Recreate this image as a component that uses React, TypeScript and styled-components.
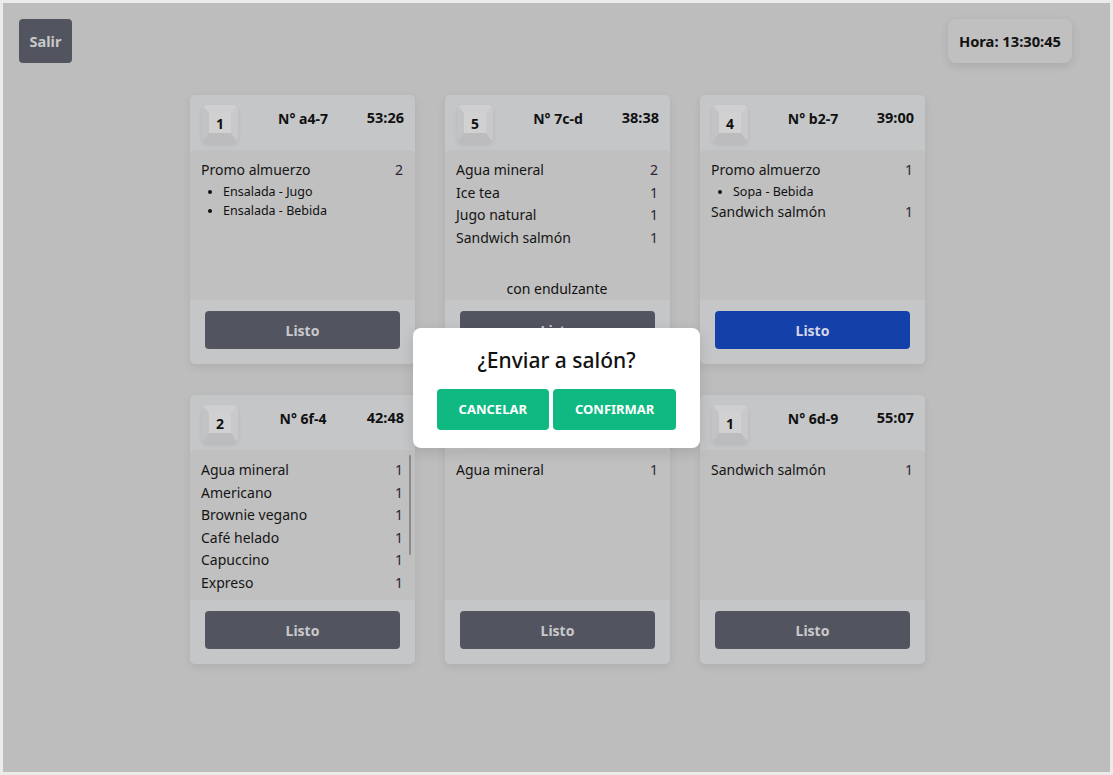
import React from "react";
import styled, { createGlobalStyle } from "styled-components";

const Global = createGlobalStyle`
  html, body { margin: 0; padding: 0; }
  body {
    background: #ebebeb;
    font-family: "Noto Sans", "Open Sans", Arial, sans-serif;
    color: #111;
  }
  * { box-sizing: border-box; }
`;

const Page = styled.div`
  position: relative;
  margin: 3px;
  height: 769px;
  background: #bdbdbd;
  overflow: hidden;
`;

const TopBar = styled.div`
  display: flex;
  justify-content: space-between;
  align-items: flex-start;
  padding: 16px 38px 0 16px;
`;

const DarkButton = styled.button<{ $active?: boolean }>`
  border: none;
  border-radius: 4px;
  background: ${(p) => (p.$active ? "#1340a9" : "#525560")};
  color: ${(p) => (p.$active ? "#d4d6e8" : "#c9c9cb")};
  font-family: inherit;
  font-weight: 700;
  font-size: 14px;
  cursor: pointer;
`;

const ExitButton = styled(DarkButton)`
  width: 53px;
  height: 44px;
  font-size: 14.5px;
`;

const Clock = styled.div`
  height: 44px;
  padding: 0 11px;
  display: flex;
  align-items: center;
  background: #c0c0c0;
  border-radius: 8px;
  box-shadow: 0 3px 10px rgba(0, 0, 0, 0.1);
  font-weight: 700;
  font-size: 14.7px;
  color: #111;
`;

const Grid = styled.div`
  display: grid;
  grid-template-columns: repeat(3, 225px);
  column-gap: 30px;
  row-gap: 31px;
  justify-content: center;
  margin-top: 32px;
  padding-left: 2px;
`;

const Card = styled.div`
  width: 225px;
  height: 269px;
  background: #c5c6c8;
  border-radius: 5px;
  box-shadow: 0 3px 8px rgba(0, 0, 0, 0.08);
  display: flex;
  flex-direction: column;
`;

const CardHeader = styled.div`
  height: 55px;
  display: grid;
  grid-template-columns: 1fr auto 1fr;
  align-items: start;
  padding: 10px 11px 0 12px;
`;

const Badge = styled.div`
  width: 36px;
  height: 38px;
  border-style: solid;
  border-width: 8px 7px 10px 7px;
  border-color: #cfcfd1 #c9c9cb #bcbcbe #c3c3c5;
  border-radius: 5px;
  background: #d1d1d1;
  box-shadow: 0 2px 4px rgba(0, 0, 0, 0.08);
  display: flex;
  align-items: flex-end;
  justify-content: center;
  font-weight: 700;
  font-size: 14px;
  line-height: 18px;
  color: #111;
`;

const OrderNo = styled.div`
  font-weight: 700;
  font-size: 14px;
  line-height: 20px;
  margin-top: 4px;
  white-space: nowrap;
`;

const Timer = styled.div`
  justify-self: end;
  font-weight: 700;
  font-size: 14.5px;
  line-height: 20px;
  margin-top: 2px;
`;

const ItemsWrap = styled.div`
  position: relative;
  height: 150px;
  background: #c0c0c0;
  border-radius: 5px 5px 0 0;
`;

const Items = styled.div`
  height: 100%;
  padding: 9px 12px 0 11px;
  overflow-y: auto;
  display: flex;
  flex-direction: column;
`;

const ScrollThumb = styled.div`
  position: absolute;
  right: 4px;
  top: 5px;
  width: 2px;
  height: 100px;
  border-radius: 1px;
  background: #8a8a8a;
`;

const ItemRow = styled.div`
  display: flex;
  justify-content: space-between;
  font-size: 14px;
  line-height: 22.5px;
  color: #151515;
  flex-shrink: 0;
`;

const Qty = styled.span`
  color: #2b2436;
`;

const SubList = styled.ul`
  margin: 0;
  padding-left: 22px;
  font-size: 12.5px;
  line-height: 19px;
  flex-shrink: 0;
  li::marker { font-size: 11px; }
`;

const Note = styled.div`
  margin-top: auto;
  text-align: center;
  font-size: 14px;
  line-height: 22px;
`;

const CardFooter = styled.div`
  flex: 1;
  display: flex;
  justify-content: center;
  padding-top: 11px;
`;

const ReadyButton = styled(DarkButton)`
  width: 195px;
  height: 38px;
`;

const Overlay = styled.div`
  position: absolute;
  inset: 0;
  display: flex;
  align-items: center;
  justify-content: center;
`;

const Modal = styled.div`
  width: 287px;
  background: #ffffff;
  border-radius: 8px;
  padding: 18px 22px 18px 22px;
  display: flex;
  flex-direction: column;
  align-items: center;
  gap: 14px;
  box-shadow: 0 4px 14px rgba(0, 0, 0, 0.12);
`;

const ModalTitle = styled.div`
  font-size: 21px;
  font-weight: 500;
  line-height: 29px;
  color: #111;
`;

const ModalActions = styled.div`
  display: flex;
  gap: 4px;
`;

const GreenButton = styled.button`
  height: 41px;
  padding: 0 22px;
  border: none;
  border-radius: 4px;
  background: #10b981;
  color: #fff;
  font-family: inherit;
  font-weight: 700;
  font-size: 13px;
  text-transform: uppercase;
  cursor: pointer;
`;

type Item = { name: string; qty: number; subs?: string[] };
type Order = {
  badge: number;
  no: string;
  time: string;
  items: Item[];
  note?: string;
  active?: boolean;
};

const orders: Order[] = [
  {
    badge: 1,
    no: "a4-7",
    time: "53:26",
    items: [{ name: "Promo almuerzo", qty: 2, subs: ["Ensalada - Jugo", "Ensalada - Bebida"] }],
  },
  {
    badge: 5,
    no: "7c-d",
    time: "38:38",
    items: [
      { name: "Agua mineral", qty: 2 },
      { name: "Ice tea", qty: 1 },
      { name: "Jugo natural", qty: 1 },
      { name: "Sandwich salmón", qty: 1 },
    ],
    note: "con endulzante",
  },
  {
    badge: 4,
    no: "b2-7",
    time: "39:00",
    items: [
      { name: "Promo almuerzo", qty: 1, subs: ["Sopa - Bebida"] },
      { name: "Sandwich salmón", qty: 1 },
    ],
    active: true,
  },
  {
    badge: 2,
    no: "6f-4",
    time: "42:48",
    items: [
      { name: "Agua mineral", qty: 1 },
      { name: "Americano", qty: 1 },
      { name: "Brownie vegano", qty: 1 },
      { name: "Café helado", qty: 1 },
      { name: "Capuccino", qty: 1 },
      { name: "Expreso", qty: 1 },
      { name: "Latte", qty: 1 },
      { name: "Mocaccino", qty: 1 },
      { name: "Té verde", qty: 1 },
    ],
  },
  {
    badge: 3,
    no: "9a-2",
    time: "47:15",
    items: [{ name: "Agua mineral", qty: 1 }],
  },
  {
    badge: 1,
    no: "6d-9",
    time: "55:07",
    items: [{ name: "Sandwich salmón", qty: 1 }],
  },
];

function OrderCard({ order }: { order: Order }) {
  const overflowing = order.items.length > 6;
  return (
    <Card>
      <CardHeader>
        <Badge>{order.badge}</Badge>
        <OrderNo>N° {order.no}</OrderNo>
        <Timer>{order.time}</Timer>
      </CardHeader>
      <ItemsWrap>
        <Items>
          {order.items.map((it, i) => (
            <React.Fragment key={i}>
              <ItemRow>
                <span>{it.name}</span>
                <Qty>{it.qty}</Qty>
              </ItemRow>
              {it.subs && (
                <SubList>
                  {it.subs.map((s) => (
                    <li key={s}>{s}</li>
                  ))}
                </SubList>
              )}
            </React.Fragment>
          ))}
          {order.note && <Note>{order.note}</Note>}
        </Items>
        {overflowing && <ScrollThumb />}
      </ItemsWrap>
      <CardFooter>
        <ReadyButton $active={order.active}>Listo</ReadyButton>
      </CardFooter>
    </Card>
  );
}

export default function App() {
  return (
    <>
      <Global />
      <Page>
        <TopBar>
          <ExitButton>Salir</ExitButton>
          <Clock>Hora: 13:30:45</Clock>
        </TopBar>
        <Grid>
          {orders.map((o, i) => (
            <OrderCard key={i} order={o} />
          ))}
        </Grid>
        <Overlay>
          <Modal>
            <ModalTitle>¿Enviar a salón?</ModalTitle>
            <ModalActions>
              <GreenButton>Cancelar</GreenButton>
              <GreenButton>Confirmar</GreenButton>
            </ModalActions>
          </Modal>
        </Overlay>
      </Page>
    </>
  );
}
